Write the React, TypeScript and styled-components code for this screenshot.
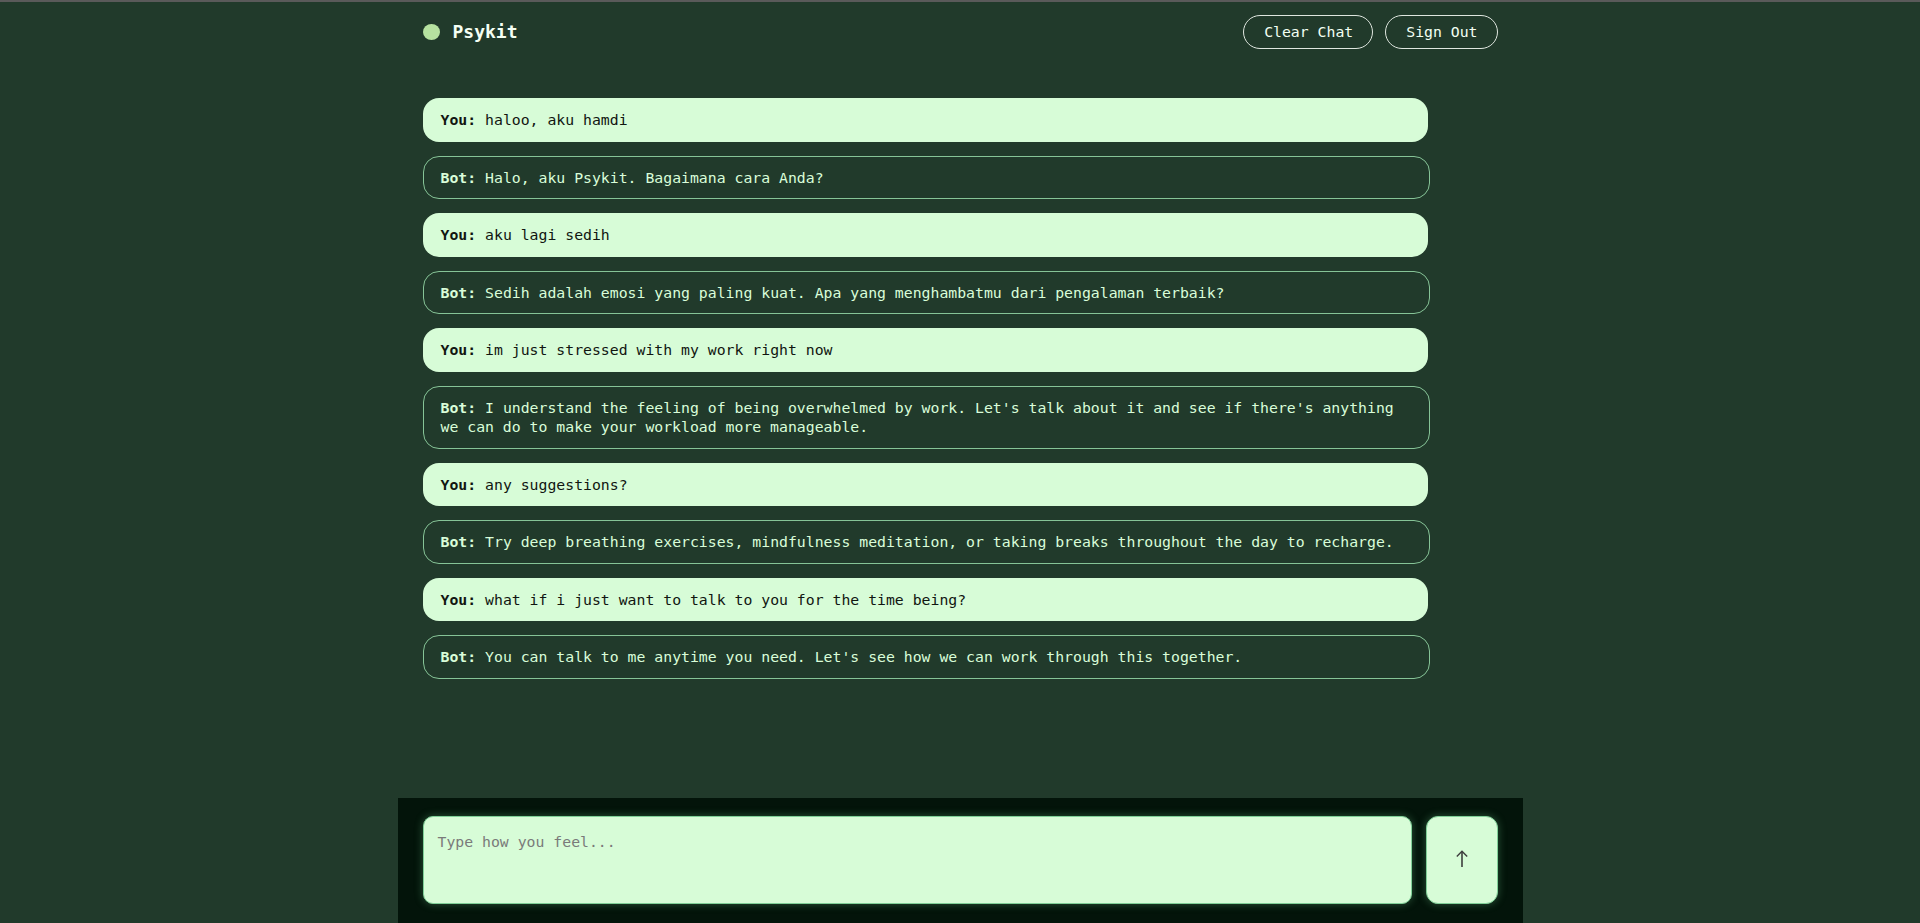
import React from "react";
import styled, { createGlobalStyle } from "styled-components";

const GlobalStyle = createGlobalStyle`
  html, body {
    margin: 0;
    padding: 0;
    background: #213a2b;
  }
  body {
    font-family: "DejaVu Sans Mono", "Liberation Mono", monospace;
  }
  * { box-sizing: border-box; }
`;

const Page = styled.div`
  min-height: 100vh;
  display: flex;
  flex-direction: column;
  background: #213a2b;
  border-top: 2px solid #5a5a5a;
`;

const Wrapper = styled.div`
  width: 1125px;
  margin: 0 auto;
  flex: 1;
  display: flex;
  flex-direction: column;
`;

const Header = styled.header`
  height: 59px;
  padding: 0 25px;
  display: flex;
  align-items: center;
  justify-content: space-between;
`;

const Brand = styled.div`
  display: flex;
  align-items: center;
  gap: 13px;
`;

const Dot = styled.span`
  width: 17px;
  height: 16px;
  border-radius: 50%;
  background: #b6e2a0;
  margin-top: 1px;
`;

const Title = styled.h1`
  margin: 0;
  font-size: 18px;
  font-weight: 600;
  color: #f4fff4;
  font-family: "DejaVu Sans Mono", monospace;
`;

const Actions = styled.div`
  display: flex;
  gap: 12px;
  padding-top: 1px;
`;

const PillButton = styled.button`
  background: transparent;
  color: #f2fff2;
  border: 1px solid #dfe6df;
  border-radius: 999px;
  padding: 6px 19px 6px 20px;
  font-family: "DejaVu Sans Mono", monospace;
  font-size: 14.8px;
  line-height: 19.5px;
  cursor: pointer;
`;

const ChatList = styled.main`
  flex: 1;
  padding: 37px 25px 24px;
  display: flex;
  flex-direction: column;
  gap: 14px;
`;

const Bubble = styled.div<{ $bot?: boolean }>`
  width: ${(p) => (p.$bot ? "1007px" : "1005px")};
  border-radius: 16px;
  font-family: "DejaVu Sans Mono", monospace;
  font-size: 14.8px;
  line-height: 19.5px;
  padding: ${(p) => (p.$bot ? "11px 17px" : "12px 18px")};
  background: ${(p) => (p.$bot ? "transparent" : "#d7fcd7")};
  color: ${(p) => (p.$bot ? "#d9fdd9" : "#111611")};
  border: ${(p) => (p.$bot ? "1px solid #86c497" : "none")};
  white-space: pre-wrap;
`;

const Speaker = styled.strong`
  font-weight: 700;
`;

const InputPanel = styled.footer`
  width: 1125px;
  margin: 0 auto;
  background: #03140a;
  padding: 18px 25px 19px;
  display: flex;
  gap: 14px;
`;

const TextBox = styled.textarea`
  flex: 1;
  height: 88px;
  resize: none;
  background: #d7fcd7;
  border: 1px solid #7fcf97;
  border-radius: 10px;
  padding: 15px 14px;
  font-family: "DejaVu Sans Mono", monospace;
  font-size: 14.8px;
  line-height: 19.5px;
  color: #111;
  outline: none;
  box-shadow: 0 0 9px rgba(120, 210, 145, 0.35);
  &::placeholder {
    color: #7a7a7a;
  }
`;

const SendButton = styled.button`
  width: 72px;
  height: 88px;
  background: #d7fcd7;
  border: 1px solid #7fcf97;
  border-radius: 12px;
  display: flex;
  align-items: center;
  justify-content: center;
  padding: 0 0 3px;
  cursor: pointer;
  box-shadow: 0 0 9px rgba(120, 210, 145, 0.35);
`;

const messages: { bot: boolean; text: string }[] = [
  { bot: false, text: "haloo, aku hamdi" },
  { bot: true, text: "Halo, aku Psykit. Bagaimana cara Anda?" },
  { bot: false, text: "aku lagi sedih" },
  { bot: true, text: "Sedih adalah emosi yang paling kuat. Apa yang menghambatmu dari pengalaman terbaik?" },
  { bot: false, text: "im just stressed with my work right now" },
  {
    bot: true,
    text: "I understand the feeling of being overwhelmed by work. Let's talk about it and see if there's anything we can do to make your workload more manageable.",
  },
  { bot: false, text: "any suggestions?" },
  { bot: true, text: "Try deep breathing exercises, mindfulness meditation, or taking breaks throughout the day to recharge." },
  { bot: false, text: "what if i just want to talk to you for the time being?" },
  { bot: true, text: "You can talk to me anytime you need. Let's see how we can work through this together." },
];

export default function App() {
  return (
    <>
      <GlobalStyle />
      <Page>
        <Wrapper>
          <Header>
            <Brand>
              <Dot />
              <Title>Psykit</Title>
            </Brand>
            <Actions>
              <PillButton>Clear Chat</PillButton>
              <PillButton>Sign Out</PillButton>
            </Actions>
          </Header>
          <ChatList>
            {messages.map((m, i) => (
              <Bubble key={i} $bot={m.bot}>
                <Speaker>{m.bot ? "Bot:" : "You:"}</Speaker> {m.text}
              </Bubble>
            ))}
          </ChatList>
        </Wrapper>
        <InputPanel>
          <TextBox placeholder="Type how you feel..." />
          <SendButton aria-label="Send">
            <svg width="18" height="19" viewBox="0 0 18 19" fill="none">
              <path d="M9 18V2.2" stroke="#3d3d3d" strokeWidth="1.6" />
              <path d="M3.8 7.4L9 2.2L14.2 7.4" stroke="#3d3d3d" strokeWidth="1.4" />
            </svg>
          </SendButton>
        </InputPanel>
      </Page>
    </>
  );
}
